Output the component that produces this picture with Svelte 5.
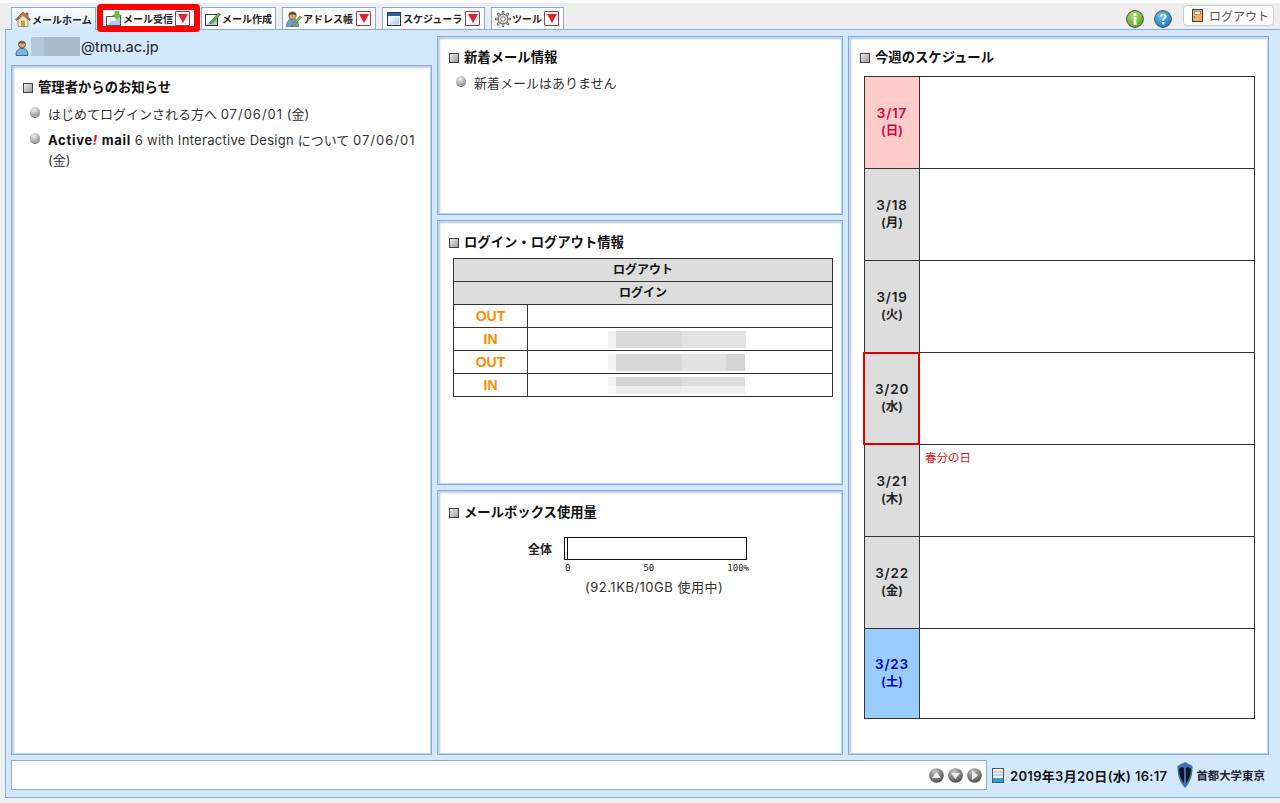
<script lang="ts">
  // Webメールのホーム画面
  const tabs = [
    { label: 'メール受信', icon: 'inbox', menu: true, width: 93, flagged: true },
    { label: 'メール作成', icon: 'compose', menu: false, width: 75 },
    { label: 'アドレス帳', icon: 'person', menu: true, width: 94 },
    { label: 'スケジューラ', icon: 'calendar', menu: true, width: 103 },
    { label: 'ツール', icon: 'gear', menu: true, width: 73 }
  ];

  const logins = [
    { kind: 'OUT', smear: '' },
    { kind: 'IN', smear: 'a' },
    { kind: 'OUT', smear: 'b' },
    { kind: 'IN', smear: 'c' }
  ];

  const days = [
    { date: '3/17', wd: '日', tone: 'sun' },
    { date: '3/18', wd: '月', tone: '' },
    { date: '3/19', wd: '火', tone: '' },
    { date: '3/20', wd: '水', tone: 'today' },
    { date: '3/21', wd: '木', tone: '', note: '春分の日' },
    { date: '3/22', wd: '金', tone: '' },
    { date: '3/23', wd: '土', tone: 'sat' }
  ];
</script>

{#snippet tabIcon(name: string)}
  <svg class="ticon" viewBox="0 0 16 16" aria-hidden="true">
    {#if name === 'home'}
      <path d="M3 9 8 4.500 13 9v6.500H3z" fill="#f3e7c4" stroke="#8a7a55" stroke-width=".7" />
      <path d="M.5 8.500 8 1l3 3V2h2v4.500l2.500 2-1 1L8 3.500 1.500 9.500z" fill="#c8703a" stroke="#6d3f22" stroke-width=".6" />
      <rect x="6.500" y="10" width="3" height="5.500" fill="#d99a2e" stroke="#7d5a20" stroke-width=".4" />
    {:else if name === 'inbox'}
      <rect x=".5" y="5.500" width="14" height="9" fill="#f7f9fc" stroke="#4b5a70" />
      <path d="M1 14 6.500 9.500l2 1 5.500-3.500v7z" fill="#a9c8ea" />
      <path d="M9 .5h4v3.500h2.500L11 8.500 6.500 4H9z" fill="#6cc23a" stroke="#3f8a1f" stroke-width=".5" />
    {:else if name === 'compose'}
      <rect x=".5" y="3.500" width="12" height="11" fill="#f7f9fc" stroke="#2d3a4c" />
      <path d="M1 14 5.500 9.500l2 1L12 7v7z" fill="#a9c8ea" />
      <path d="m5.500 10.500 8-8.500 2 1.500-8 8.500-2.500.8z" fill="#6fb33f" stroke="#2f5f1c" stroke-width=".6" />
    {:else if name === 'person'}
      <path d="M.5 15.500c0-5 2-7.500 6-7.500s6 2.500 6 7.500z" fill="#6f9fcf" stroke="#3c5f88" stroke-width=".6" />
      <circle cx="6.500" cy="4.500" r="3.800" fill="#d9a878" stroke="#5d452d" stroke-width=".6" />
      <path d="M2.700 4.500C3 .2 10 .2 10.300 4.500 8 3 5.500 3 2.700 4.500z" fill="#5e4526" />
      <path d="m6 14 8-9 1.700 1.300-8 9-2.400.7z" fill="#7dbb45" stroke="#2f5f1c" stroke-width=".5" />
    {:else if name === 'calendar'}
      <rect x="1.500" y="1.500" width="13" height="13" fill="#eef4fb" stroke="#2a364c" />
      <rect x="2" y="2" width="12" height="3" fill="#2c5fa8" />
      <path d="M3 6h10v7.500H3z" fill="url(#calfill)" />
      <defs>
        <linearGradient id="calfill" x1="0" y1="0" x2="1" y2="1">
          <stop offset="0" stop-color="#fff" />
          <stop offset="1" stop-color="#a9c6ea" />
        </linearGradient>
      </defs>
    {:else if name === 'gear'}
      <g stroke="#666" stroke-width="2.600" stroke-linecap="round">
        <path d="M8 1v14M1 8h14M3 3l10 10M13 3 3 13" />
      </g>
      <g stroke="#ddd" stroke-width="1.200" stroke-linecap="round">
        <path d="M8 1.500v13M1.500 8h13M3.400 3.400l9.200 9.200M12.600 3.400l-9.200 9.200" />
      </g>
      <circle cx="8" cy="8" r="4.800" fill="#d8d8d8" stroke="#555" stroke-width=".8" />
      <circle cx="8" cy="8" r="2.200" fill="#fff" stroke="#666" stroke-width=".8" />
    {/if}
  </svg>
{/snippet}

{#snippet arrow()}
  <span class="menu-arrow"><i></i></span>
{/snippet}

{#snippet ball(kind: string)}
  <svg class="ball" viewBox="0 0 15 15" aria-hidden="true">
    <defs>
      <radialGradient id={`g-${kind}`} cx=".4" cy=".25" r=".85">
        <stop offset="0" stop-color="#c4c4c4" />
        <stop offset="1" stop-color="#3e3e3e" />
      </radialGradient>
    </defs>
    <circle cx="7.500" cy="7.500" r="7.300" fill={`url(#g-${kind})`} />
    {#if kind === 'up'}
      <path d="M7.500 4 12 10H3z" fill="#eee" />
    {:else if kind === 'down'}
      <path d="M7.500 11 12 5H3z" fill="#eee" />
    {:else}
      <path d="M11 7.500 5 3v9z" fill="#eee" />
    {/if}
  </svg>
{/snippet}

<div class="page">
  <header class="topbar">
    <nav class="tabs">
      <div class="tab active" style="width: 85px">
        {@render tabIcon('home')}
        <span>メールホーム</span>
      </div>
      {#each tabs as t}
        <div class="tab" class:flagged={t.flagged} style={`width: ${t.width}px`}>
          {@render tabIcon(t.icon)}
          <span>{t.label}</span>
          {#if t.menu}{@render arrow()}{/if}
          {#if t.flagged}<div class="annotation"></div>{/if}
        </div>
      {/each}
    </nav>
    <div class="top-tools">
      <svg class="round" viewBox="0 0 18 18" aria-hidden="true">
        <defs>
          <radialGradient id="gi" cx=".4" cy=".3" r=".8"><stop offset="0" stop-color="#b6e26e" /><stop offset="1" stop-color="#4c9a1c" /></radialGradient>
        </defs>
        <circle cx="9" cy="9" r="8.400" fill="url(#gi)" stroke="#555" stroke-width="1" />
        <rect x="7.600" y="3" width="2.800" height="2.800" fill="#fff" />
        <rect x="7.600" y="7" width="2.800" height="8" fill="#fff" />
      </svg>
      <svg class="round" viewBox="0 0 18 18" aria-hidden="true">
        <defs>
          <radialGradient id="gq" cx=".4" cy=".3" r=".8"><stop offset="0" stop-color="#6fc4f2" /><stop offset="1" stop-color="#0f6fc4" /></radialGradient>
        </defs>
        <circle cx="9" cy="9" r="8.400" fill="url(#gq)" stroke="#555" stroke-width="1" />
        <path d="M5.800 6.500C6 2.800 12.500 2.800 12.500 6.500c0 2.300-2.400 2.400-2.500 4.500H8c0-3 2.300-3.200 2.300-4.600 0-1.500-2.300-1.500-2.400.1z" fill="#fff" />
        <rect x="8" y="12" width="2.200" height="2.400" fill="#fff" />
      </svg>
      <button class="logout" type="button">
        <svg class="door" viewBox="0 0 12 14" aria-hidden="true">
          <rect x=".5" y=".5" width="11" height="13" fill="#eeb163" stroke="#333" />
          <rect x="3" y="2.500" width="6" height="3.500" fill="#fff" stroke="#8a5a20" stroke-width=".6" />
          <rect x="2" y="8" width="1.200" height="1.200" fill="#333" />
        </svg>
        ログアウト
      </button>
    </div>
  </header>

  <main class="shell">
    <div class="columns">
      <div class="col-left">
        <div class="user">
          <svg class="user-icon" viewBox="0 0 14 16" aria-hidden="true">
            <path d="M1 15.500c0-5 2-7 6-7s6 2 6 7z" fill="#7ab5ea" stroke="#2c4a70" stroke-width=".8" />
            <circle cx="7" cy="4.500" r="3.500" fill="#d9a878" stroke="#4d3a25" stroke-width=".7" />
            <path d="M3.500 4C4 .8 10 .8 10.500 4 8 3 6 3 3.500 4z" fill="#7a5a34" />
          </svg>
          <span class="user-mask"></span>
          <span class="user-domain">@tmu.ac.jp</span>
        </div>
        <section class="panel grow lower">
          <h2>管理者からのお知らせ</h2>
          <ul class="notices">
            <li>はじめてログインされる方へ <span class="stamp-date">07/06/01</span> (金)</li>
            <li><b>Active<em>!</em> mail</b> <span class="latin">6 with Interactive Design</span> について <span class="stamp-date">07/06/01</span> (金)</li>
          </ul>
        </section>
      </div>

      <div class="col-mid">
        <section class="panel mail">
          <h2>新着メール情報</h2>
          <ul class="notices tight"><li>新着メールはありません</li></ul>
        </section>
        <section class="panel logins lower">
          <h2>ログイン・ログアウト情報</h2>
          <table class="log-table">
            <colgroup><col class="col-kind" /><col /></colgroup>
            <tbody>
              <tr><th colspan="2">ログアウト</th></tr>
              <tr><th colspan="2">ログイン</th></tr>
              {#each logins as row}
                <tr>
                  <td class="kind">{row.kind}</td>
                  <td class="stamp">{#if row.smear}<span class={`smear ${row.smear}`}></span>{/if}</td>
                </tr>
              {/each}
            </tbody>
          </table>
        </section>
        <section class="panel grow lower">
          <h2>メールボックス使用量</h2>
          <div class="usage">
            <div class="usage-row">
              <b>全体</b>
              <div class="usage-track"><i></i></div>
            </div>
            <div class="usage-scale"><span>0</span><span>50</span><span>100%</span></div>
            <div class="usage-note">(92.1KB/10GB 使用中)</div>
          </div>
        </section>
      </div>

      <section class="panel week">
        <h2>今週のスケジュール</h2>
        <table class="cal">
          <colgroup><col class="col-date" /><col /></colgroup>
          <tbody>
            {#each days as d}
              <tr>
                <th class={d.tone}><span class="d">{d.date}</span><br /><span class="w">({d.wd})</span></th>
                <td>{#if d.note}<span class="holiday">{d.note}</span>{/if}</td>
              </tr>
            {/each}
          </tbody>
        </table>
      </section>
    </div>

    <footer class="status">
      <div class="ticker">
        {@render ball('up')}
        {@render ball('down')}
        {@render ball('right')}
      </div>
      <svg class="meter" viewBox="0 0 12 15" aria-hidden="true">
        <rect x=".5" y=".5" width="11" height="14" fill="#eef2f6" stroke="#555" />
        <rect x="1" y="10" width="10" height="4" fill="#2f9fd8" />
        <path d="M1 4h10M1 7h10" stroke="#aab" />
      </svg>
      <span class="clock">2019年3月20日(水) 16:17</span>
      <svg class="crest" viewBox="0 0 16 26" aria-hidden="true">
        <path d="M8 0 15.500 4C16 13 13 21 8 26 3 21 0 13 .5 4z" fill="#3f6fae" />
        <path d="M2 7c2-2 4-2 5-1v15C4 18 2 12 2 7zM14 7c-2-2-4-2-5-1v15c3-3 5-9 5-14z" fill="#101820" />
      </svg>
      <span class="univ">首都大学東京</span>
    </footer>
  </main>
</div>

<style>
  :global(body) {
    margin: 0;
    background: #eee;
  }
  .page {
    height: 803px;
    overflow: hidden;
    display: flex;
    flex-direction: column;
    font-family: Inter, "Noto Sans CJK JP", sans-serif;
    font-size: 13px;
    color: #222;
    border-top: 3px solid #fff;
    box-sizing: border-box;
  }

  .topbar {
    height: 26px;
    display: flex;
    justify-content: space-between;
    flex: none;
  }
  .tabs {
    display: flex;
    align-items: flex-end;
    padding-left: 11px;
    gap: 6px;
  }
  .tab {
    position: relative;
    box-sizing: border-box;
    height: 22px;
    display: flex;
    align-items: center;
    gap: 1px;
    padding: 0 1px 0 3px;
    background: #fff;
    border: 1px solid #85ace6;
    border-bottom: 0;
    font-size: 10px;
    font-weight: 700;
    white-space: nowrap;
  }
  .tab.active {
    background: linear-gradient(#fff, #d4e8fb);
    z-index: 1;
    margin-bottom: -1px;
    height: 23px;
  }
  .ticon {
    width: 16px;
    height: 16px;
    flex: none;
  }
  .menu-arrow {
    box-sizing: border-box;
    margin-left: auto;
    margin-right: 3px;
    width: 15px;
    height: 15px;
    border: 1px solid #b5303a;
    background: #fff;
    border-radius: 1px;
    display: flex;
    align-items: center;
    justify-content: center;
    flex: none;
  }
  .menu-arrow i {
    width: 0;
    height: 0;
    border-left: 5px solid transparent;
    border-right: 5px solid transparent;
    border-top: 9px solid #e0202c;
  }
  .annotation {
    position: absolute;
    left: -6px;
    right: -6px;
    top: -4px;
    bottom: -3px;
    border: 6px solid #f00;
    border-radius: 4px;
    pointer-events: none;
  }

  .top-tools {
    display: flex;
    align-items: flex-start;
    padding-right: 6px;
  }
  .round {
    width: 18px;
    height: 18px;
    margin: 7px 10px 0 0;
    flex: none;
  }
  .logout {
    box-sizing: border-box;
    width: 91px;
    height: 21px;
    margin: 2px 0 0 1px;
    padding: 0 0 0 8px;
    background: #fff;
    border: 1px solid #ccc;
    border-radius: 4px;
    font: 12px "Liberation Sans", "Noto Sans CJK JP", sans-serif;
    color: #555;
    display: flex;
    align-items: center;
    gap: 6px;
    white-space: nowrap;
  }
  .door {
    width: 11px;
    height: 13px;
  }

  .shell {
    flex: none;
    height: 769px;
    box-sizing: border-box;
    margin-left: 5px;
    padding: 6px 11px 0 5px;
    background: #d4e8fb;
    border: 1px solid #85ace6;
    border-right: 0;
    display: flex;
    flex-direction: column;
    gap: 5px;
  }
  .columns {
    display: grid;
    grid-template-columns: 421px 406px 421px;
    column-gap: 5px;
    height: 719px;
  }
  .col-left,
  .col-mid {
    display: flex;
    flex-direction: column;
    min-height: 0;
  }
  .col-mid {
    gap: 5px;
  }
  .user {
    height: 29px;
    box-sizing: border-box;
    padding: 0 0 9px 4px;
    display: flex;
    align-items: center;
    flex: none;
  }
  .user-domain {
    font-size: 14.600px;
    padding: 1px 0 0 1px;
  }
  .user-icon {
    width: 14px;
    height: 16px;
    margin: 3px 2px 0 0;
  }
  .user-mask {
    width: 49px;
    height: 19px;
    background: linear-gradient(90deg, #b3c8d8 0 13px, #a9bccb 13px);
  }

  .panel {
    box-sizing: border-box;
    background: #fff;
    border: 1px solid #85ace6;
    box-shadow:
      inset 1px 1px 0 #bcd2f2,
      inset -1px -1px 0 #bcd2f2,
      inset 2px 2px 2px #c8c8c8;
    padding: 12px 11px 0;
    min-height: 0;
  }
  .panel.lower {
    padding-top: 13px;
  }
  .panel.grow {
    flex: 1;
  }
  .panel.mail {
    height: 179px;
    flex: none;
  }
  .panel.logins {
    height: 265px;
    flex: none;
  }
  h2 {
    margin: 0;
    height: 17px;
    line-height: 17px;
    font-family: "Liberation Sans", "Noto Sans CJK JP", sans-serif;
    font-size: 13.330px;
    font-weight: 700;
    display: flex;
    align-items: center;
    gap: 5px;
    color: #111;
  }
  h2::before {
    content: "";
    box-sizing: border-box;
    width: 10px;
    height: 10px;
    border: 1px solid #444;
    background: linear-gradient(135deg, #eee, #999);
    flex: none;
  }
  .notices {
    list-style: none;
    margin: 8px 0 0;
    padding: 0 0 0 7px;
    line-height: 20px;
    color: #333;
  }
  .notices.tight {
    margin-top: 7px;
  }
  .notices li {
    position: relative;
    padding-left: 18px;
    margin-bottom: 6px;
  }
  .stamp-date {
    letter-spacing: 1px;
  }
  .latin {
    letter-spacing: .3px;
  }
  .notices li::before {
    content: "";
    position: absolute;
    left: 0;
    top: 3px;
    width: 10px;
    height: 10px;
    border-radius: 50%;
    background: radial-gradient(circle at 40% 30%, #eee, #777);
    box-shadow: 0 1px 0 #666;
  }
  .notices b {
    color: #111;
    letter-spacing: .7px;
  }
  .notices em {
    color: #e01010;
    font-style: italic;
  }

  .log-table {
    width: 380px;
    margin: 7px 0 0 4px;
    border-collapse: collapse;
    table-layout: fixed;
  }
  .col-kind {
    width: 74px;
  }
  .log-table th,
  .log-table td {
    height: 22px;
    padding: 0;
    border: 1px solid #333;
    text-align: center;
  }
  .log-table th {
    height: 21px;
    padding-top: 1px;
    background: #ddd;
    font-family: "Liberation Sans", "Noto Sans CJK JP", sans-serif;
    font-size: 12px;
    line-height: 21px;
    color: #111;
  }
  .kind {
    color: #ff8c00;
    font-family: "Liberation Sans", sans-serif;
    font-weight: 700;
    font-size: 14px;
  }
  .stamp {
    line-height: 0;
  }
  .smear {
    display: inline-block;
    width: 138px;
    height: 17px;
    margin-right: 6px;
    vertical-align: middle;
  }
  .smear.a {
    background: linear-gradient(90deg, #f2f2f2 0 8px, #dbdbdb 8px 74px, #e3e3e3 74px);
  }
  .smear.b {
    background: linear-gradient(90deg, #f4f4f4 0 8px, #d8d8d8 8px 74px, #e2e2e2 74px 118px, #d4d4d4 118px 137px, #fff 137px);
  }
  .smear.c {
    background:
      linear-gradient(#0000 0 9px, #ffffff88 9px),
      linear-gradient(90deg, #f4f4f4 0 8px, #d6d6d6 8px 74px, #dedede 74px 137px, #fff 137px);
  }

  .usage {
    font-size: 12px;
    margin-top: 16px;
  }
  .usage-row {
    display: flex;
    align-items: center;
    padding-left: 79px;
    gap: 12px;
    font-family: "Liberation Sans", "Noto Sans CJK JP", sans-serif;
    font-size: 12px;
  }
  .usage-track {
    box-sizing: border-box;
    width: 183px;
    height: 23px;
    border: 1px solid #111;
    background: #fff;
  }
  .usage-track i {
    display: block;
    width: 2px;
    height: 100%;
    border-right: 1px solid #111;
  }
  .usage-scale {
    width: 184px;
    margin: 2px 0 0 116px;
    display: flex;
    justify-content: space-between;
    font-family: "DejaVu Sans Mono", monospace;
    font-size: 9px;
    line-height: 12px;
    color: #222;
  }
  .usage-note {
    margin: 5px 0 0 136px;
    font-size: 13px;
    letter-spacing: .5px;
    line-height: 16px;
    color: #333;
    white-space: nowrap;
  }

  .cal {
    width: 391px;
    margin: 10px 0 0 4px;
    border-collapse: collapse;
    table-layout: fixed;
  }
  .col-date {
    width: 55px;
  }
  .cal tr {
    height: 92px;
  }
  .cal tr:last-child {
    height: 90px;
  }
  .cal th,
  .cal td {
    padding: 0;
    border: 1px solid #333;
  }
  .cal th {
    position: relative;
    padding-bottom: 2px;
    background: #ddd;
    font-weight: 600;
    line-height: 17px;
    color: #222;
    text-align: center;
  }
  .cal th .d {
    font-size: 13.500px;
    letter-spacing: .8px;
  }
  .cal th .w {
    font-size: 12.500px;
  }
  .cal th.sun {
    background: #fcc;
    color: #e0003c;
  }
  .cal th.sat {
    background: #9cf;
    color: #0000cc;
  }
  .cal th.today::after {
    content: "";
    position: absolute;
    inset: -1px -1px -1px -2px;
    border: 2px solid #d00;
  }
  .cal td {
    vertical-align: top;
    padding: 6px 0 0 5px;
  }
  .holiday {
    color: #e01010;
    font-size: 11.500px;
    line-height: 14px;
    display: block;
  }

  .status {
    height: 30px;
    display: flex;
    align-items: center;
  }
  .ticker {
    box-sizing: border-box;
    width: 976px;
    height: 30px;
    flex: none;
    background: #fff;
    border: 1px solid #85ace6;
    display: flex;
    align-items: center;
    justify-content: flex-end;
    gap: 4px;
    padding-right: 4px;
  }
  .ball {
    width: 15px;
    height: 15px;
  }
  .meter {
    width: 12px;
    height: 15px;
    margin: 0 6px 0 5px;
    flex: none;
  }
  .clock {
    font-size: 13px;
    font-weight: 600;
    letter-spacing: .32px;
    white-space: nowrap;
    color: #111;
  }
  .crest {
    width: 16px;
    height: 26px;
    margin: 0 3px 0 10px;
    flex: none;
  }
  .univ {
    font-size: 11.400px;
    font-weight: 700;
    color: #223;
    white-space: nowrap;
  }
</style>
